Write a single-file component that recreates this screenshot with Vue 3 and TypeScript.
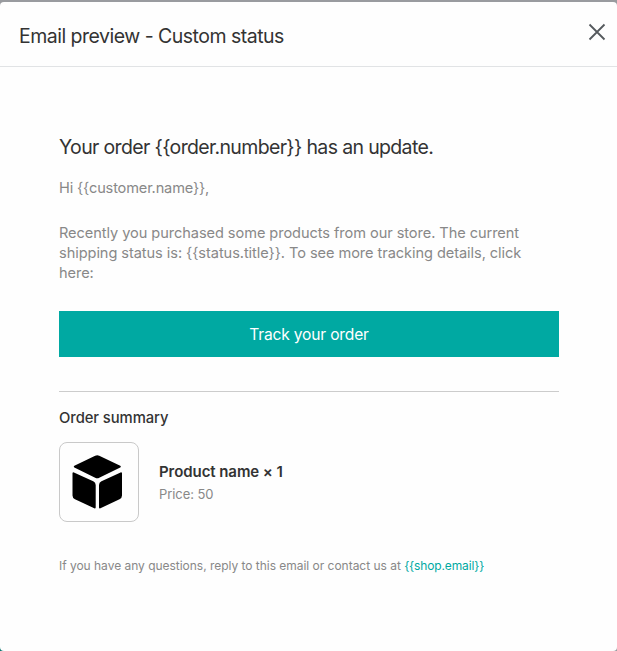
<script setup lang="ts">
interface OrderLine {
  name: string
  quantity: number
  price: number
}

const heading = 'Your order {{order.number}} has an update.'
const greeting = 'Hi {{customer.name}},'
const message = [
  'Recently you purchased some products from our store. The current',
  'shipping status is: {{status.title}}. To see more tracking details, click',
  'here:',
]
const shopEmail = '{{shop.email}}'
const items: OrderLine[] = [{ name: 'Product name', quantity: 1, price: 50 }]
</script>

<template>
  <div class="backdrop">
    <section class="modal" role="dialog" aria-labelledby="modal-title">
      <header class="modal-header">
        <h2 id="modal-title">Email preview - Custom status</h2>
        <button class="close" type="button" aria-label="Close">
          <svg width="18" height="18" viewBox="0 0 18 18">
            <path d="M1.5 1.5 16.5 16.5M16.5 1.5 1.5 16.5" fill="none" stroke="#55595d" stroke-width="1.8" />
          </svg>
        </button>
      </header>
      <main class="email">
        <h1>{{ heading }}</h1>
        <p class="greeting">{{ greeting }}</p>
        <p class="message">
          <span v-for="line in message" :key="line" class="line">{{ line }}</span>
        </p>
        <button class="track" type="button">Track your order</button>
        <section class="summary">
          <h3>Order summary</h3>
          <div v-for="item in items" :key="item.name" class="product">
            <div class="thumb">
              <svg width="53" height="56" viewBox="0 0 53 56">
                <g fill="#000" stroke="#000" stroke-width="2" stroke-linejoin="round">
                  <path d="M24.6 2.6Q26.2 1.8 27.8 2.6L48.8 12.6 27.8 22.8Q26.2 23.6 24.6 22.8L3.8 12.6Z" />
                  <path d="M2.5 19.3 21.8 28.2Q23.7 29.2 23.7 31V53.4L4.4 44.3Q2.5 43.3 2.5 41.4Z" />
                  <path d="M50 19.3 30.9 28.2Q29 29.2 29 31V53.4L48.1 44.3Q50 43.3 50 41.4Z" />
                </g>
              </svg>
            </div>
            <div class="details">
              <strong>{{ item.name }} × {{ item.quantity }}</strong>
              <small>Price: {{ item.price }}</small>
            </div>
          </div>
        </section>
        <p class="footer"><span class="question">If you have any questions, reply to this email or contact us at </span><a>{{ shopEmail }}</a></p>
      </main>
    </section>
  </div>
</template>

<style>
body {
  background: #fff;
}
</style>

<style scoped>
* {
  box-sizing: border-box;
}
.backdrop {
  height: 651px;
  padding-top: 2px;
  overflow: hidden;
  background:
    linear-gradient(#999b9f, #999b9f) top / 100% 50% no-repeat,
    linear-gradient(90deg, #08756f 50%, #999b9f 50%);
  font-family: Inter, "Liberation Sans", sans-serif;
  color: #333;
}
.modal {
  height: 649px;
  border-radius: 4px;
  background: #fefefe;
}
h1, h2, h3, p {
  margin: 0;
  font-weight: 400;
  white-space: nowrap;
}
.modal-header {
  display: flex;
  align-items: flex-start;
  justify-content: space-between;
  height: 65px;
  padding: 21px 11px 0 19px;
  border-bottom: 1px solid #e1e3e5;
}
h2 {
  font-size: 19.5px;
  line-height: 26px;
  letter-spacing: -0.51px;
}
.close {
  display: flex;
  padding: 0;
  border: 0;
  background: none;
}
.email {
  padding: 67px 58px 0 59px;
}
h1 {
  font-size: 19.5px;
  line-height: 26px;
  letter-spacing: -0.65px;
}
.greeting {
  margin-top: 18px;
  font-size: 14.6px;
  line-height: 20px;
  letter-spacing: -0.16px;
  color: #888;
}
.message {
  margin-top: 25px;
  font-size: 14.6px;
  line-height: 20px;
  letter-spacing: -0.07px;
  color: #888;
}
.line {
  display: block;
}
.track {
  display: block;
  width: 100%;
  height: 46px;
  margin-top: 28px;
  padding: 1px 0 0;
  border: 0;
  background: #00a9a2;
  color: #fff;
  font: 400 15.6px/45px Inter, sans-serif;
  line-height: 46px;
  letter-spacing: -0.18px;
}
.summary {
  margin-top: 34px;
  padding-top: 16px;
  border-top: 1px solid #ccc;
}
h3 {
  font-size: 14.8px;
  line-height: 20px;
  font-weight: 500;
  letter-spacing: -0.07px;
}
.product {
  display: flex;
  margin-top: 14px;
}
.thumb {
  width: 80px;
  height: 80px;
  padding: 11px 0 0 11px;
  border: 1px solid #c9c9c9;
  border-radius: 8px;
}
.details {
  padding: 20px 0 0 20px;
}
strong, small {
  display: block;
}
strong {
  font-size: 15px;
  line-height: 20px;
  font-weight: 600;
  letter-spacing: -0.07px;
}
small {
  margin-top: 3px;
  font-size: 13px;
  line-height: 18px;
  letter-spacing: -0.08px;
  color: #888;
}
.footer {
  margin-top: 35px;
  font-size: 12px;
  line-height: 18px;
  color: #888;
}
.question {
  letter-spacing: -0.025px;
  white-space: pre;
}
a {
  color: #00a9a2;
  letter-spacing: -0.14px;
}
</style>
